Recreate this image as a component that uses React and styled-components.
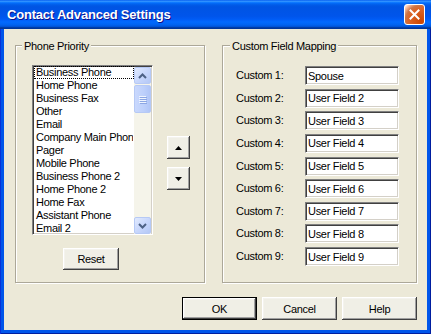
import React from "react";
import styled, { createGlobalStyle } from "styled-components";

const phones = [
  "Business Phone",
  "Home Phone",
  "Business Fax",
  "Other",
  "Email",
  "Company Main Phone",
  "Pager",
  "Mobile Phone",
  "Business Phone 2",
  "Home Phone 2",
  "Home Fax",
  "Assistant Phone",
  "Email 2",
];

const customs = [
  "Spouse",
  "User Field 2",
  "User Field 3",
  "User Field 4",
  "User Field 5",
  "User Field 6",
  "User Field 7",
  "User Field 8",
  "User Field 9",
];

const GlobalStyle = createGlobalStyle`
  html, body {
    margin: 0;
    padding: 0;
    background: #fff;
  }
  body {
    font-family: "Liberation Sans", Arial, sans-serif;
    font-size: 11px;
    letter-spacing: -0.3px;
    color: #000;
  }
`;

const Window = styled.div`
  width: 431px;
  height: 334px;
  display: flex;
  flex-direction: column;
  background: #0055ea;
  box-shadow: inset 1px 0 #0831d9, inset -1px 0 #001ea0, inset 0 -1px #001ea0;
  overflow: hidden;
`;

const TitleBar = styled.div`
  height: 29px;
  flex-shrink: 0;
  display: flex;
  align-items: center;
  justify-content: space-between;
  padding: 0 6px 0 7px;
  background: linear-gradient(180deg, #0058ee 0%, #3593ff 4%, #288eff 6%, #127dff 8%, #036ffc 10%, #0262ee 14%, #0057e5 20%, #0054e3 24%, #0055eb 56%, #005bf5 66%, #026afe 76%, #0062ef 86%, #0052d6 92%, #0040ab 94%, #003092 100%);
`;

const Title = styled.div`
  color: #fff;
  font-weight: bold;
  font-size: 13px;
  letter-spacing: -0.2px;
  text-shadow: 1px 1px #0f1089;
`;

const CloseButton = styled.div`
  width: 21px;
  height: 21px;
  box-sizing: border-box;
  border: 1px solid #fff;
  border-radius: 3px;
  background: radial-gradient(circle at 85% 85%, #cc4600 0%, #dc6527 55%, #cd7546 70%, #ffccb2 90%, #fff 100%);
  display: flex;
  align-items: center;
  justify-content: center;
`;

const Client = styled.div`
  flex: 1;
  margin: 0 4px 4px;
  background: #ece9d8;
  padding: 16px 10px 10px 11px;
  display: flex;
  flex-direction: column;
`;

const GroupsRow = styled.div`
  display: flex;
  gap: 17px;
  height: 238px;
`;

const Group = styled.div`
  position: relative;
  box-sizing: border-box;
  width: ${(p) => p.$width}px;
  height: 100%;
  border: 1px solid #aca899;
  box-shadow: inset 1px 1px #fff, 1px 1px #fff;
`;

const Legend = styled.span`
  position: absolute;
  top: -6px;
  left: ${(p) => p.$left}px;
  padding: 0 2px;
  line-height: 13px;
  background: #ece9d8;
`;

const PhoneBody = styled.div`
  padding: 19px 0 0 16px;
  display: flex;
  flex-direction: column;
`;

const ListRow = styled.div`
  display: flex;
  align-items: flex-start;
`;

const ListBox = styled.div`
  box-sizing: border-box;
  width: 121px;
  height: 170px;
  padding: 0 1px 0 1px;
  border: 1px solid;
  border-color: #808080 #fff #fff #808080;
  box-shadow: inset 1px 1px #404040, inset -1px -1px #d4d0c8;
  background: #fff;
  display: flex;
  overflow: hidden;
`;

const Items = styled.div`
  flex: 1;
  overflow: hidden;
`;

const Item = styled.div`
  box-sizing: border-box;
  height: 13px;
  padding-left: 1px;
  white-space: nowrap;
  overflow: hidden;
  border: 1px dotted ${(p) => (p.$focused ? "#000" : "transparent")};
  border-width: ${(p) => (p.$focused ? "1px" : "0 1px")};
  line-height: ${(p) => (p.$focused ? "11px" : "13px")};
`;

const ScrollBar = styled.div`
  width: 17px;
  margin-top: 1px;
  display: flex;
  flex-direction: column;
  background: #f5f4ea;
`;

const ScrollButton = styled.div`
  box-sizing: border-box;
  width: 17px;
  height: 17px;
  border: 1px solid #b6c9f5;
  border-radius: 2px;
  background: linear-gradient(135deg, #e1eafe 0%, #c8d7fc 50%, #b4c8f6 100%);
  display: flex;
  align-items: center;
  justify-content: center;
`;

const Thumb = styled.div`
  box-sizing: border-box;
  margin-top: 1px;
  width: 17px;
  height: 28px;
  border: 1px solid #b6c9f5;
  border-radius: 2px;
  background: linear-gradient(90deg, #c9d8fd 0%, #bccffb 60%, #b0c5f7 100%);
  display: flex;
  flex-direction: column;
  align-items: center;
  justify-content: center;
  gap: 1px;
`;

const Grip = styled.div`
  width: 7px;
  height: 1px;
  background: #eef4fe;
  box-shadow: 1px 1px #8ca6e4;
`;

const Track = styled.div`
  flex: 1;
`;

const ArrowColumn = styled.div`
  display: flex;
  flex-direction: column;
  gap: 8px;
  margin: 71px 0 0 14px;
`;

const Button = styled.div`
  box-sizing: border-box;
  width: ${(p) => p.$w}px;
  height: ${(p) => p.$h}px;
  display: flex;
  align-items: center;
  justify-content: center;
  background: #f0efe6;
  border: ${(p) => (p.$default ? "1px solid #000" : "none")};
  box-shadow: inset -1px -1px #404040, inset 1px 1px #fff, inset -2px -2px #a0a0a0, inset 2px 2px #f4f3ee;
  font-size: 11px;
`;

const ResetWrap = styled.div`
  margin: 13px 0 0 31px;
`;

const CustomGrid = styled.div`
  padding: 20px 0 0 13px;
  display: grid;
  grid-template-columns: 69px 94px;
  grid-auto-rows: 19px;
  row-gap: 3.625px;
  align-items: center;
`;

const FieldLabel = styled.span`
  line-height: 13px;
`;

const TextBox = styled.input`
  box-sizing: border-box;
  width: 94px;
  height: 19px;
  margin: 0;
  padding: 0 2px;
  border: 1px solid;
  border-color: #808080 #fff #fff #808080;
  box-shadow: inset 1px 1px #404040, inset -1px -1px #d4d0c8;
  background: #fff;
  font-family: "Liberation Sans", Arial, sans-serif;
  font-size: 11px;
  letter-spacing: -0.3px;
  color: #000;
  outline: none;
`;

const Footer = styled.div`
  margin-top: 14px;
  display: flex;
  justify-content: flex-end;
  gap: 5px;
`;

const Chevron = ({ up }) => (
  <svg width="9" height="6" viewBox="0 0 9 6">
    <polyline
      points={up ? "1,5 4.5,1.5 8,5" : "1,1 4.5,4.5 8,1"}
      fill="none"
      stroke="#4d6185"
      strokeWidth="2"
    />
  </svg>
);

const Triangle = ({ up }) => (
  <svg width="7" height="4" viewBox="0 0 7 4">
    <polygon points={up ? "0,4 7,4 3.5,0" : "0,0 7,0 3.5,4"} fill="#000" />
  </svg>
);

const App = () => {
  return (
    <>
      <GlobalStyle />
      <Window>
        <TitleBar>
          <Title>Contact Advanced Settings</Title>
          <CloseButton>
            <svg width="11" height="11" viewBox="0 0 11 11">
              <path d="M1.5 1.5 L9.5 9.5 M9.5 1.5 L1.5 9.5" stroke="#fff" strokeWidth="2" strokeLinecap="square" />
            </svg>
          </CloseButton>
        </TitleBar>
        <Client>
          <GroupsRow>
            <Group $width={190}>
              <Legend $left={6}>Phone Priority</Legend>
              <PhoneBody>
                <ListRow>
                  <ListBox>
                    <Items>
                      {phones.map((p, i) => (
                        <Item key={p} $focused={i === 0}>{p}</Item>
                      ))}
                    </Items>
                    <ScrollBar>
                      <ScrollButton><Chevron up /></ScrollButton>
                      <Thumb>
                        <Grip /><Grip /><Grip /><Grip />
                      </Thumb>
                      <Track />
                      <ScrollButton><Chevron /></ScrollButton>
                    </ScrollBar>
                  </ListBox>
                  <ArrowColumn>
                    <Button $w={23} $h={23}><Triangle up /></Button>
                    <Button $w={23} $h={23}><Triangle /></Button>
                  </ArrowColumn>
                </ListRow>
                <ResetWrap>
                  <Button $w={56} $h={22}>Reset</Button>
                </ResetWrap>
              </PhoneBody>
            </Group>
            <Group $width={195}>
              <Legend $left={7}>Custom Field Mapping</Legend>
              <CustomGrid>
                {customs.map((c, i) => (
                  <React.Fragment key={i}>
                    <FieldLabel>Custom {i + 1}:</FieldLabel>
                    <TextBox readOnly defaultValue={c} />
                  </React.Fragment>
                ))}
              </CustomGrid>
            </Group>
          </GroupsRow>
          <Footer>
            <Button $w={75} $h={23} $default>OK</Button>
            <Button $w={75} $h={23}>Cancel</Button>
            <Button $w={75} $h={23}>Help</Button>
          </Footer>
        </Client>
      </Window>
    </>
  );
};

export default App;
